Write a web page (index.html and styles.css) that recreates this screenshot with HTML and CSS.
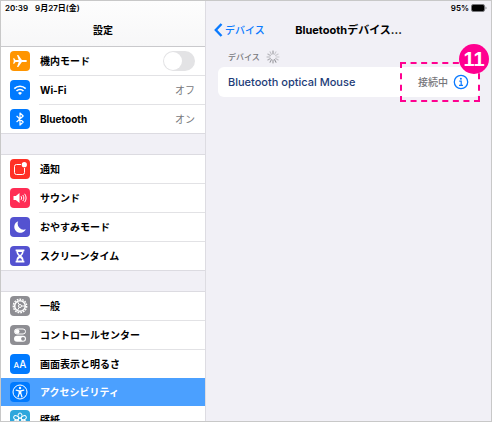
FILE: index.html
```
<!DOCTYPE html>
<html lang="ja">
<head>
  <meta charset="utf-8">
  <title>設定</title>
  <link rel="stylesheet" href="styles.css">
</head>
<body>
<div class="screen">

  <!-- left: settings menu -->
  <nav class="sidebar">
    <header class="side-head">
      <div class="status"><span>20:39</span><span>9月27日(金)</span></div>
      <h1 class="title">設定</h1>
    </header>

    <ul class="list">
      <li class="row">
        <svg class="icon orange" viewBox="0 0 20 20"><path fill="#fff" d="M17 10c0-.8-.9-1.100-1.900-1.100h-3.200L8.300 4H7l1.700 4.900H5.500L4.200 7.300H3.100L3.800 10l-.7 2.700h1.100l1.300-1.600h3.200L7 16h1.300l3.600-4.900h3.200c1 0 1.900-.3 1.900-1.100z"/></svg>
        <label class="name" for="airplane">機内モード</label>
        <input class="switch" type="checkbox" id="airplane">
      </li>
      <li>
        <a class="row" href="#">
          <svg class="icon blue" viewBox="0 0 20 20"><g fill="none" stroke="#fff" stroke-width="1.600"><path d="M4.300 8.600a8.200 8.200 0 0 1 11.400 0"/><path d="M6.500 11a5 5 0 0 1 7 0"/></g><path fill="#fff" d="M10 15l-2-2.100a2.900 2.900 0 0 1 4 0z"/></svg>
          <span class="name">Wi-Fi</span><span class="value">オフ</span>
        </a>
      </li>
      <li>
        <a class="row" href="#">
          <svg class="icon blue" viewBox="0 0 20 20"><path fill="none" stroke="#fff" stroke-width="1.200" stroke-linejoin="round" d="M6.600 7l6.600 6-3.200 3V4l3.200 3-6.600 6"/></svg>
          <span class="name">Bluetooth</span><span class="value">オン</span>
        </a>
      </li>
    </ul>

    <ul class="list">
      <li>
        <a class="row" href="#">
          <svg class="icon red" viewBox="0 0 20 20"><rect x="4.500" y="5.500" width="10" height="10" rx="2" fill="none" stroke="#fff" stroke-width="1"/><circle cx="14.300" cy="5.700" r="3.400" fill="#ff3126"/><circle cx="14.300" cy="5.700" r="2.600" fill="#fff"/></svg>
          <span class="name">通知</span>
        </a>
      </li>
      <li>
        <a class="row" href="#">
          <svg class="icon pink" viewBox="0 0 20 20"><path fill="#fff" d="M3.500 8v4h2.300L9.500 15V5L5.800 8z"/><g fill="none" stroke="#fff" stroke-width="1"><path d="M11 8.200c.8 1.100.8 2.500 0 3.600"/><path d="M12.800 7c1.400 1.800 1.400 4.200 0 6"/><path d="M14.600 5.800c2 2.500 2 5.900 0 8.400"/></g></svg>
          <span class="name">サウンド</span>
        </a>
      </li>
      <li>
        <a class="row" href="#">
          <svg class="icon purple" viewBox="0 0 20 20"><path fill="#fff" d="M8.200 4.200a6 6 0 1 0 7.600 8A6 6 0 0 1 8.200 4.200z"/></svg>
          <span class="name">おやすみモード</span>
        </a>
      </li>
      <li>
        <a class="row" href="#">
          <svg class="icon purple" viewBox="0 0 20 20"><path fill="#fff" d="M5.600 3.500h8.800v1.800h-.8c0 2.400-.9 3.600-2.300 4.700 1.400 1.100 2.300 2.300 2.300 4.700h.8v1.800H5.600v-1.800h.8c0-2.400.9-3.600 2.300-4.700C7.300 8.900 6.400 7.700 6.400 5.300h-.8z"/><path fill="#5452d0" d="M8 6h4c-.3 1.400-1 2.200-2 3-1-.8-1.700-1.600-2-3zM7.800 14.600c.4-1.300 1.200-2 2.200-2.600 1 .6 1.800 1.300 2.200 2.600z"/></svg>
          <span class="name">スクリーンタイム</span>
        </a>
      </li>
    </ul>

    <ul class="list">
      <li>
        <a class="row" href="#">
          <svg class="icon gray" viewBox="0 0 20 20"><circle cx="10" cy="10" r="6.700" fill="none" stroke="#fff" stroke-width="1.400" stroke-dasharray="1.750 1.050"/><circle cx="10" cy="10" r="5.300" fill="none" stroke="#fff" stroke-width="1.500"/><path fill="none" stroke="#fff" stroke-width="1" d="M11.500 10H15M9.200 8.700L7.500 5.700M9.200 11.300l-1.700 3"/><circle cx="10" cy="10" r="1.500" fill="none" stroke="#fff" stroke-width="1"/></svg>
          <span class="name">一般</span>
        </a>
      </li>
      <li>
        <a class="row" href="#">
          <svg class="icon gray" viewBox="0 0 20 20"><rect x="4.500" y="4" width="11" height="5" rx="2.500" fill="none" stroke="#fff" stroke-width="1"/><circle cx="7.200" cy="6.500" r="2.300" fill="#fff"/><rect x="4" y="10.800" width="12" height="6" rx="3" fill="#fff"/><circle cx="13" cy="13.800" r="1.900" fill="#8e8e93"/></svg>
          <span class="name">コントロールセンター</span>
        </a>
      </li>
      <li>
        <a class="row" href="#">
          <span class="icon blue letters"><small>A</small>A</span>
          <span class="name">画面表示と明るさ</span>
        </a>
      </li>
      <li class="selected">
        <a class="row" href="#">
          <svg class="icon blue" viewBox="0 0 20 20"><circle cx="10" cy="10" r="7" fill="none" stroke="#fff" stroke-width="1"/><circle cx="10" cy="6" r="1.200" fill="#fff"/><path fill="none" stroke="#fff" stroke-width="1.200" stroke-linecap="round" stroke-linejoin="round" d="M6.200 8.200l2.800.6h2l2.800-.6M9.200 9v2.500L8 15M10.800 9v2.500L12 15M10 9v2.500"/></svg>
          <span class="name">アクセシビリティ</span>
        </a>
      </li>
      <li>
        <a class="row" href="#">
          <svg class="icon cyan" viewBox="0 0 20 20"><g fill="none" stroke="#fff" stroke-width="1"><circle cx="10" cy="10" r="2"/><ellipse cx="10" cy="5.600" rx="2" ry="2.600"/><ellipse cx="10" cy="5.600" rx="2" ry="2.600" transform="rotate(60 10 10)"/><ellipse cx="10" cy="5.600" rx="2" ry="2.600" transform="rotate(120 10 10)"/><ellipse cx="10" cy="5.600" rx="2" ry="2.600" transform="rotate(180 10 10)"/><ellipse cx="10" cy="5.600" rx="2" ry="2.600" transform="rotate(240 10 10)"/><ellipse cx="10" cy="5.600" rx="2" ry="2.600" transform="rotate(300 10 10)"/></g></svg>
          <span class="name">壁紙</span>
        </a>
      </li>
    </ul>
  </nav>

  <!-- right: bluetooth devices -->
  <main class="detail">
    <div class="status right">
      <span>95%</span>
      <svg class="battery" viewBox="0 0 16 8"><rect x=".5" y=".5" width="13" height="7" rx="1.500" fill="none" stroke="#77777b"/><rect x="1" y="1" width="12" height="6" rx="1" fill="#000"/><path fill="#77777b" d="M14.500 2.500c1.300.4 1.300 2.600 0 3z"/></svg>
    </div>
    <header class="detail-head">
      <a class="back" href="#">
        <svg class="chevron" viewBox="0 0 9 14"><path d="M7.500 1L1.800 7l5.700 6" fill="none" stroke="#0a7aff" stroke-width="2.400"/></svg>デバイス</a>
      <h2 class="title">Bluetoothデバイス...</h2>
    </header>

    <section class="devices">
      <h3 class="caption">デバイス
        <svg class="spinner" viewBox="0 0 14 14"><g stroke="#8e8e93" stroke-width="1" stroke-linecap="round"><path d="M7 1v3"/><path d="M7 1v3" transform="rotate(30 7 7)" opacity=".4"/><path d="M7 1v3" transform="rotate(60 7 7)" opacity=".4"/><path d="M7 1v3" transform="rotate(90 7 7)" opacity=".4"/><path d="M7 1v3" transform="rotate(120 7 7)" opacity=".5"/><path d="M7 1v3" transform="rotate(150 7 7)"/><path d="M7 1v3" transform="rotate(180 7 7)"/><path d="M7 1v3" transform="rotate(210 7 7)" opacity=".9"/><path d="M7 1v3" transform="rotate(240 7 7)" opacity=".7"/><path d="M7 1v3" transform="rotate(270 7 7)" opacity=".6"/><path d="M7 1v3" transform="rotate(300 7 7)" opacity=".6"/><path d="M7 1v3" transform="rotate(330 7 7)" opacity=".5"/></g></svg>
      </h3>
      <div class="card">
        <span class="device">Bluetooth optical Mouse</span>
        <span class="state">接続中</span>
        <button class="info" aria-label="詳細">
          <svg viewBox="0 0 16 16"><circle cx="8" cy="8" r="6.700" fill="none" stroke="#0a7aff" stroke-width="1.300"/><circle cx="7.900" cy="4.700" r="1" fill="#0a7aff"/><path d="M6.300 7.200h1.900v4M6 11.400h4" fill="none" stroke="#0a7aff" stroke-width="1.200"/></svg>
        </button>
        <div class="callout"><span class="badge">11</span></div>
      </div>
    </section>
  </main>

</div>
</body>
</html>
```
FILE: styles.css
```
* {
  box-sizing: border-box;
}

body {
  margin: 0;
  font-family: Inter, "Noto Sans CJK JP", sans-serif;
  font-size: 10px;
  line-height: 16px;
  color: #000;
}

h1, h2, h3, ul {
  margin: 0;
  padding: 0;
}

a {
  color: inherit;
  text-decoration: none;
}

.screen {
  display: grid;
  grid-template-columns: 205px 1fr;
  height: 100vh;
  overflow: hidden;
  border: 1px solid #c8c8c8;
  background: #f1f0f6;
}

/* status bar */
.status {
  display: flex;
  gap: 7px;
  height: 14px;
  padding-left: 4px;
  font-size: 8px;
  font-weight: 600;
  line-height: 14px;
}

.status.right {
  justify-content: flex-end;
  align-items: center;
  gap: 2px;
  padding: 0 4px 0 0;
}

.battery {
  width: 16px;
  height: 8px;
}

.title {
  font-size: 11px;
  font-weight: 700;
  line-height: 16px;
  text-align: center;
}

/* sidebar */
.sidebar {
  min-height: 0;
  overflow: hidden;
  border-right: 1px solid #dddce2;
}

.side-head {
  height: 46px;
  border-bottom: 1px solid #c9c9cc;
  background: linear-gradient(#fdfdfd, #f7f7f8);
}

.side-head .title {
  margin-top: 7px;
  font-size: 10px;
}

.list {
  list-style: none;
  margin-bottom: 22px;
  background: #fff;
  box-shadow: 0 1px #dcdbe1, 0 -1px #dcdbe1;
}

.side-head + .list {
  box-shadow: 0 1px #dcdbe1;
}

.row {
  display: flex;
  align-items: center;
  gap: 10px;
  height: 28px;
  padding: 0 10px 0 9px;
}

/* hairline between rows, starts at the text */
.list li + li:not(.selected):not(.selected + li) {
  padding-top: 1px;
  background: linear-gradient(#e2e2e5, #e2e2e5) 38px 0 / 100% 1px no-repeat;
}

.name {
  flex: 1;
  font-weight: 700;
}

.value,
.state {
  color: #77777b;
}

.selected {
  background: #4ba0ff;
  color: #fff;
}

.icon {
  flex: none;
  width: 20px;
  height: 20px;
  border-radius: 4px;
}

.orange { background: #ff9500; }
.blue { background: #007aff; }
.red { background: #ff3126; }
.pink { background: #ff2d55; }
.purple { background: #5452d0; }
.gray { background: #8e8e93; }
.cyan { background: #2ea7dc; }

.letters {
  display: flex;
  justify-content: center;
  align-items: baseline;
  color: #fff;
  font-size: 10px;
  font-weight: 500;
  line-height: 20px;
}

.letters small {
  font-size: 8px;
}

.switch {
  appearance: none;
  width: 32px;
  height: 20px;
  margin: 0;
  padding: 1px;
  border-radius: 10px;
  background: #e3e3e5;
}

.switch::before {
  content: "";
  display: block;
  width: 18px;
  height: 18px;
  border-radius: 50%;
  background: #fff;
}

.switch:checked {
  background: #34c759;
}

.switch:checked::before {
  margin-left: 12px;
}

/* detail */
.detail-head {
  display: grid;
  grid-template-columns: 1fr auto 1fr;
  align-items: center;
  margin-top: 7px;
  padding: 0 8px;
}

.back {
  display: flex;
  align-items: center;
  gap: 2px;
  color: #0a7aff;
  font-weight: 500;
}

.chevron {
  width: 9px;
  height: 14px;
}

.devices {
  padding: 11px 11px 0 12px;
}

.caption {
  display: flex;
  align-items: center;
  gap: 6px;
  padding-left: 10px;
  color: #77777b;
  font-size: 8px;
  font-weight: 500;
}

.spinner {
  width: 14px;
  height: 14px;
}

.card {
  position: relative;
  display: flex;
  align-items: center;
  height: 30px;
  margin-top: 2px;
  padding: 0 11px 0 10px;
  border-radius: 6px;
  background: #fff;
}

.device {
  flex: 1;
  color: #1d3c78;
  font-size: 11px;
  font-weight: 500;
}

.state {
  font-weight: 500;
}

.info {
  width: 16px;
  height: 16px;
  margin-left: 5px;
  padding: 0;
  border: 0;
  background: none;
}

.info svg {
  display: block;
}

/* numbered marker over the card */
.callout {
  position: absolute;
  top: -5px;
  right: 0;
  width: 80px;
  height: 40px;
  border: 2px dashed #ff0090;
}

.badge {
  position: absolute;
  top: -20px;
  right: -11px;
  width: 30px;
  height: 30px;
  border-radius: 50%;
  background: #ff0090;
  color: #fff;
  font: bold 20px/30px "Liberation Sans", Arial, sans-serif;
  text-align: center;
}
```
